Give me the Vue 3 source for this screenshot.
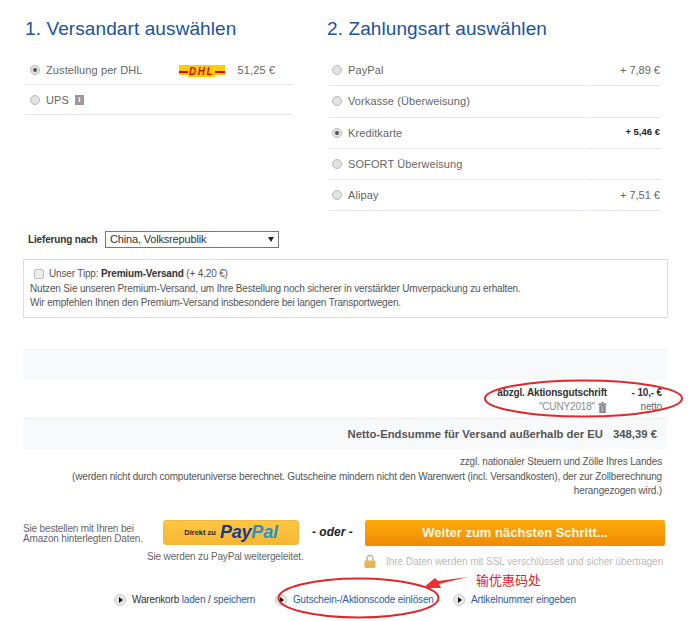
<script setup>
const shipping = [
  { label: 'Zustellung per DHL', checked: true, dhl: true, price: '51,25 €' },
  { label: 'UPS', info: true }
]
const payment = [
  { label: 'PayPal', price: '+ 7,89 €' },
  { label: 'Vorkasse (Überweisung)', price: '' },
  { label: 'Kreditkarte', price: '+ 5,46 €', checked: true },
  { label: 'SOFORT Überweisung', price: '' },
  { label: 'Alipay', price: '+ 7,51 €' }
]
</script>

<template>
  <div class="page">
    <div class="columns">
      <section class="col-ship">
        <h2>1. Versandart auswählen</h2>
        <div v-for="r in shipping" :key="r.label" class="row ship-row">
          <span class="radio" :class="{ on: r.checked }"></span>
          <span class="label">{{ r.label }}</span>
          <span v-if="r.info" class="info">i</span>
          <span v-if="r.dhl" class="dhl"><span class="dhl-text">DHL</span></span>
          <span v-if="r.price" class="ship-price">{{ r.price }}</span>
        </div>
      </section>
      <section class="col-pay">
        <h2>2. Zahlungsart auswählen</h2>
        <div v-for="r in payment" :key="r.label" class="pay-row">
          <div class="pay-main">
            <span class="radio" :class="{ on: r.checked }"></span>
            <span class="label">{{ r.label }}</span>
          </div>
          <div class="pay-price" :class="{ strong: r.checked }">{{ r.price }}</div>
        </div>
      </section>
    </div>

    <div class="country">
      <span class="country-label">Lieferung nach</span>
      <div class="select">China, Volksrepublik<span class="caret"></span></div>
    </div>

    <div class="tip">
      <div class="tip-head">
        <span class="check"></span>
        <span>Unser Tipp: <b>Premium-Versand</b> (+ 4,20 €)</span>
      </div>
      <p>Nutzen Sie unseren Premium-Versand, um Ihre Bestellung noch sicherer in verstärkter Umverpackung zu erhalten.</p>
      <p>Wir empfehlen Ihnen den Premium-Versand insbesondere bei langen Transportwegen.</p>
    </div>

    <div class="band"></div>
    <div class="discount">
      <div class="disc-line">
        <b class="disc-name">abzgl. Aktionsgutschrift</b>
        <b class="disc-val">- 10,- €</b>
      </div>
      <div class="disc-line">
        <span class="disc-name code">"CUNY2018"
          <svg class="trash" viewBox="0 0 10 12" width="9" height="11">
            <rect x="0.5" y="1.5" width="9" height="1.5" fill="#777" />
            <rect x="3.5" y="0" width="3" height="1.5" fill="#888" />
            <path d="M1.5 3.5h7V12h-7z" fill="#777" />
            <path d="M3.5 4.5V11M5 4.5V11M6.5 4.5V11" stroke="#ddd" stroke-width=".6" />
          </svg>
        </span>
        <span class="disc-val netto">netto</span>
      </div>
    </div>
    <div class="total">
      <b class="total-label">Netto-Endsumme für Versand außerhalb der EU</b>
      <b class="total-val">348,39 €</b>
    </div>
    <div class="notes">
      <p>zzgl. nationaler Steuern und Zölle Ihres Landes</p>
      <p>(werden nicht durch computeruniverse berechnet. Gutscheine mindern nicht den Warenwert (incl. Versandkosten), der zur Zollberechnung herangezogen wird.)</p>
    </div>

    <div class="actions">
      <p class="amazon">Sie bestellen mit Ihren bei<br />Amazon hinterlegten Daten.</p>
      <div class="pp-wrap">
        <div class="pp-btn">
          <span class="pp-small">Direkt zu</span>
          <span class="pp-logo"><span class="pp-dark">Pay</span><span class="pp-light">Pal</span></span>
        </div>
        <p class="pp-note">Sie werden zu PayPal weitergeleitet.</p>
      </div>
      <span class="oder">- oder -</span>
      <div class="next-wrap">
        <div class="next-btn">Weiter zum nächsten Schritt...</div>
        <div class="ssl">
          <svg width="12" height="13" viewBox="0 0 12 13">
            <path d="M3 6V3.5a3 3 0 0 1 6 0V6" fill="none" stroke="#b9b9a8" stroke-width="1.5" />
            <rect x="0.5" y="5.5" width="11" height="7.5" rx="1" fill="#e6b84e" />
          </svg>
          <span>Ihre Daten werden mit SSL verschlüsselt und sicher übertragen</span>
        </div>
      </div>
    </div>

    <div class="links">
      <span class="link-item"><span class="play"></span><span>Warenkorb <a>laden</a> / <a>speichern</a></span></span>
      <span class="link-item"><span class="play"></span><a>Gutschein-/Aktionscode einlösen</a></span>
      <span class="link-item"><span class="play"></span><a>Artikelnummer eingeben</a></span>
    </div>

    <svg class="marks" width="700" height="621" viewBox="0 0 700 621">
      <ellipse cx="583.5" cy="398.5" rx="98.5" ry="18" fill="none" stroke="#e0262e" stroke-width="2" />
      <ellipse cx="358.5" cy="598" rx="80" ry="19.5" fill="none" stroke="#e0262e" stroke-width="2" />
      <path d="M468 577 L438 581 L435 578 L423 588 L441 588 L439 584 Z" fill="#ea2f35" />
    </svg>
    <span class="note-cn">输优惠码处</span>
  </div>
</template>

<style scoped>
.page {
  position: relative;
  width: 700px;
  height: 621px;
  overflow: hidden;
  background: #fff;
  font-family: "Liberation Sans", Arial, sans-serif;
  font-size: 10px;
  letter-spacing: -0.16px;
  color: #555;
}
p { margin: 0; }
a { color: #2a5ba8; }
.columns {
  display: flex;
  padding: 18px 0 0 25px;
  height: 212px;
  box-sizing: border-box;
}
h2 {
  margin: 0;
  height: 37px;
  font-size: 19px;
  line-height: 22px;
  font-weight: 400;
  color: #20529f;
  letter-spacing: 0.1px;
  white-space: nowrap;
}
.col-ship { width: 267px; margin-right: 37px; }
.col-pay { width: 331px; }
.col-pay h2 { margin-left: -2px; }
.row {
  display: flex;
  align-items: center;
  border-bottom: 1px solid #e4e8ec;
  box-sizing: border-box;
}
.row, .pay-row { font-size: 11px; color: #666; letter-spacing: 0.1px; }
.ship-row { height: 30px; padding-left: 5px; }
.pay-row { display: flex; gap: 2px; height: 31.3px; }
.pay-main, .pay-price {
  display: flex;
  align-items: center;
  border-bottom: 1px solid #e4e8ec;
  box-sizing: border-box;
}
.pay-main { flex: 0 0 255px; padding-left: 3px; }
.pay-price { flex: 1; justify-content: flex-end; letter-spacing: 0; }
.pay-price.strong { color: #222; font-weight: 700; font-size: 9.5px; padding-bottom: 2px; }
.radio {
  flex: none;
  width: 10px;
  height: 10px;
  border-radius: 50%;
  border: 1px solid #bbb;
  background: #e2e2e2;
  box-sizing: border-box;
  margin-right: 6px;
  position: relative;
}
.radio.on::after {
  content: "";
  position: absolute;
  left: 2px;
  top: 2px;
  width: 4px;
  height: 4px;
  border-radius: 50%;
  background: #555;
}
.info {
  width: 9px;
  height: 10px;
  margin-left: 6px;
  background: #999;
  color: #fff;
  font: bold 8px/10px "Liberation Sans", sans-serif;
  letter-spacing: 0;
  text-align: center;
}
.dhl {
  width: 46px;
  height: 10px;
  margin-left: 36px;
  background: #fc0;
  position: relative;
  display: block;
  text-align: center;
}
.dhl::before {
  content: "";
  position: absolute;
  left: 0;
  right: 0;
  top: 6px;
  height: 2px;
  background: #d40511;
}
.dhl-text {
  position: relative;
  display: inline-block;
  padding: 0 1px;
  background: #fc0;
  color: #d40511;
  font: italic 700 10px/10px "Liberation Sans", sans-serif;
  letter-spacing: 1.5px;
}
.ship-price { margin-left: 13px; }
.country {
  display: flex;
  align-items: center;
  padding-left: 28px;
  height: 17px;
  margin-top: 19px;
}
.country-label {
  width: 77px;
  font-weight: 700;
  color: #333;
}
.select {
  width: 174px;
  height: 17px;
  box-sizing: border-box;
  border: 1px solid #777;
  font-size: 11px;
  letter-spacing: -0.17px;
  line-height: 15px;
  padding-left: 4px;
  color: #333;
  position: relative;
}
.caret {
  position: absolute;
  right: 4px;
  top: 5px;
  border: 3px solid transparent;
  border-top: 5px solid #222;
  border-bottom: 0;
}
.tip {
  margin: 11px 0 0 23px;
  width: 645px;
  height: 59px;
  box-sizing: border-box;
  border: 1px solid #ddd;
  padding: 7px 6px;
  line-height: 14.5px;
}
.tip-head { display: flex; align-items: center; padding-left: 4px; gap: 5px; }
.tip-head b { color: #333; }
.check {
  width: 10px;
  height: 10px;
  border: 1px solid #bbb;
  border-radius: 2px;
  background: #eee;
  box-sizing: border-box;
}
.band {
  margin: 31px 0 0 23px;
  width: 644px;
  height: 31px;
  background: #f8f9fb;
  border-top: 1px solid #eff1f4;
  box-sizing: border-box;
}
.discount {
  margin-left: 23px;
  width: 644px;
  height: 38px;
  box-sizing: border-box;
  padding-top: 6px;
}
.disc-line { display: flex; justify-content: flex-end; line-height: 14px; }
.disc-name { color: #333; }
.disc-val { width: 60px; text-align: right; padding-right: 5px; box-sizing: border-box; color: #333; }
.code { color: #888; display: flex; align-items: center; gap: 3px; }
.netto { color: #666; }
.trash { flex: none; }
.total {
  margin-left: 23px;
  width: 644px;
  height: 31px;
  padding-bottom: 1px;
  background: #f8f9fb;
  border-top: 1px solid #eff1f4;
  box-sizing: border-box;
  display: flex;
  justify-content: flex-end;
  align-items: center;
  font-size: 11.3px;
  letter-spacing: 0;
  color: #555;
}
.total-val { width: 44px; margin-left: 10px; margin-right: 10px; text-align: right; white-space: nowrap; }
.notes {
  margin-left: 23px;
  width: 639px;
  padding-top: 6px;
  text-align: right;
  line-height: 14.6px;
}
.actions {
  position: absolute;
  left: 23px;
  top: 520px;
  display: flex;
  align-items: flex-start;
}
.amazon { width: 140px; margin-top: 4px; line-height: 10px; color: #666; }
.pp-wrap { width: 142px; }
.pp-btn {
  width: 136px;
  height: 25px;
  box-sizing: border-box;
  background: linear-gradient(#fdc743, #f7b733);
  border: 1px solid #f0b840;
  border-radius: 3px;
  display: flex;
  align-items: center;
  justify-content: center;
  gap: 4px;
}
.pp-small { font-size: 7.5px; font-weight: 700; letter-spacing: 0; color: #223; }
.pp-logo { font-size: 18px; font-weight: 700; font-style: italic; letter-spacing: -0.2px; }
.pp-dark { color: #1b3a84; }
.pp-light { color: #2b8fc7; }
.pp-note { margin-top: 6px; margin-left: -16px; white-space: nowrap; color: #666; }
.oder {
  width: 60px;
  padding-left: 7px;
  box-sizing: border-box;
  font-size: 12px;
  font-weight: 700;
  font-style: italic;
  letter-spacing: 0;
  color: #222;
  line-height: 25px;
  white-space: nowrap;
}
.next-wrap { width: 300px; }
.next-btn {
  height: 26px;
  border-radius: 2px;
  background: linear-gradient(#fdab08, #ef8a07);
  color: #fff8e0;
  font-size: 13px;
  font-weight: 700;
  letter-spacing: 0;
  line-height: 26px;
  text-align: center;
}
.ssl {
  display: flex;
  align-items: center;
  margin-top: 9px;
  letter-spacing: -0.05px;
  color: #bbb;
  white-space: nowrap;
}
.ssl svg { margin-right: 10px; margin-left: -1px; }
.links {
  position: absolute;
  top: 594px;
  left: 114px;
  display: flex;
  color: #333;
}
.link-item { display: flex; align-items: center; gap: 6px; line-height: 12px; }
.link-item:nth-child(1) { width: 161px; }
.link-item:nth-child(2) { width: 178px; }
.play {
  flex: none;
  width: 12px;
  height: 12px;
  border-radius: 50%;
  background: #e8e8e8;
  border: 1px solid #ccc;
  box-sizing: border-box;
  position: relative;
}
.play::after {
  content: "";
  position: absolute;
  left: 3.5px;
  top: 2px;
  border-left: 4px solid #111;
  border-top: 3px solid transparent;
  border-bottom: 3px solid transparent;
}
.marks { position: absolute; left: 0; top: 0; pointer-events: none; }
.note-cn {
  position: absolute;
  left: 476px;
  top: 572px;
  font-family: "Noto Sans CJK SC", sans-serif;
  font-size: 13px;
  letter-spacing: 0;
  line-height: 16px;
  color: #d8262c;
}
</style>
